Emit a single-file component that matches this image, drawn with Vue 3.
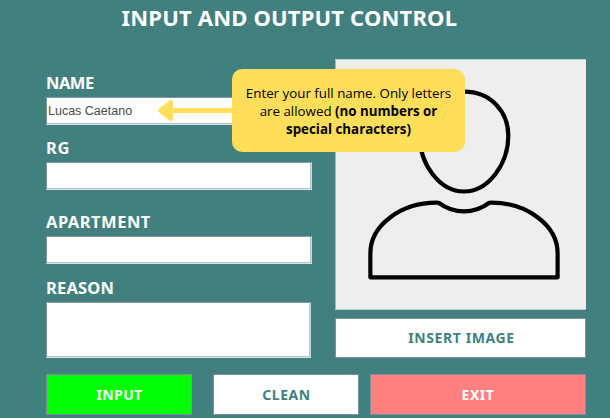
<script setup>
const fields = [
  { id: 'name', label: 'NAME', value: 'Lucas Caetano' },
  { id: 'rg', label: 'RG', value: '' },
  { id: 'apartment', label: 'APARTMENT', value: '' },
]
</script>

<template>
  <main class="window">
    <h1 class="title"><span>INPUT AND OUTPUT CONTROL</span></h1>
    <div class="content">
      <form class="form">
        <div v-for="f in fields" :key="f.id" class="field" :class="f.id">
          <label class="label"><span>{{ f.label }}</span></label>
          <div class="box">{{ f.value }}</div>
        </div>
        <div class="field reason">
          <label class="label"><span>REASON</span></label>
          <div class="box area"></div>
        </div>
      </form>
      <section class="picture">
        <div class="photo">
          <svg width="250" height="250" viewBox="336 60 250 250" fill="none" stroke="#000" stroke-width="4.2" stroke-linejoin="round">
            <path d="M464 91.8C491 91.8 508.500 112 508.500 136C508.500 165 488 192 464 192C440 192 419.500 165 419.500 136C419.500 112 437 91.800 464 91.800Z" />
            <path d="M370 278.200V254C370 226 401 202.500 438.500 203.300C454 214.800 474 214.800 489.500 203.300C527 202.500 558 226 558 254V278.200Z" />
          </svg>
        </div>
        <button class="btn insert"><span>INSERT IMAGE</span></button>
      </section>
    </div>
    <footer class="actions">
      <button class="btn input"><span>INPUT</span></button>
      <button class="btn clean"><span>CLEAN</span></button>
      <button class="btn exit"><span>EXIT</span></button>
    </footer>
    <svg class="arrow" width="76" height="24" viewBox="0 0 76 24">
      <path d="M76 10H16V4.500C16 2.300 14 1.300 12.200 2.700L2.300 10.500C1 11.600 1 13.400 2.300 14.500L12.200 22.300C14 23.700 16 22.700 16 20.500V15H76Z" fill="#ffde59" />
    </svg>
    <aside class="callout">
      <div>Enter your full name. Only letters</div>
      <div>are allowed <b>(no numbers or</b></div>
      <div><b>special characters)</b></div>
    </aside>
  </main>
</template>

<style>
body { margin: 0; background: #427f7f; }
</style>

<style scoped>
.window {
  position: relative;
  box-sizing: border-box;
  width: 610px;
  height: 418px;
  overflow: hidden;
  background: #427f7f;
  font-family: "Noto Sans", sans-serif;
}
.title {
  margin: 0;
  height: 59px;
  box-sizing: border-box;
  padding: 2px 0 0 121.500px;
  color: #fff;
  font-size: 22px;
  line-height: 30px;
  letter-spacing: 0.18px;
  font-weight: 700;
  white-space: nowrap;
}
.content {
  display: grid;
  grid-template-columns: 266px 251px;
  column-gap: 23px;
  padding-left: 46px;
  height: 315px;
}
.form { display: flex; flex-direction: column; padding-top: 13px; }
.label {
  display: block;
  height: 25px;
  line-height: 22px;
  color: #fff;
  font-size: 16.500px;
  font-weight: 700;
}
.name .label { letter-spacing: -0.5px; }
.rg .label { letter-spacing: 0.7px; }
.apartment .label { letter-spacing: 0.5px; }
.reason .label { letter-spacing: 0.2px; }
.box {
  box-sizing: border-box;
  width: 266px;
  height: 28px;
  border: 1px solid #8497a5;
  border-right-color: #c5dbdc;
  border-bottom-color: #d7e8ea;
  box-shadow: inset -1px -1px #b4c1ca;
  background: #fff;
  color: #4a4a4a;
  font: 12.500px/26px "Liberation Sans", sans-serif;
  padding-left: 1px;
}
.rg { margin-top: 12px; }
.apartment { margin-top: 21px; }
.reason { margin-top: 13px; }
.area { width: 265px; height: 56px; }
.picture { display: flex; flex-direction: column; gap: 8px; }
.photo {
  box-sizing: border-box;
  width: 251px;
  height: 251px;
  border-left: 1px solid #9dbcbd;
  border-top: 1px solid #b8cfcf;
  border-bottom: 1px solid #b8cfcf;
  background: #eee;
}
.photo svg { display: block; height: 249px; }
.btn {
  box-sizing: border-box;
  height: 41px;
  margin: 0;
  padding: 0;
  border: 1px solid #7f8f9d;
  border-radius: 0;
  background: #fff;
  color: #427f7f;
  font: 700 14px/20px "Noto Sans", sans-serif;
  letter-spacing: 0.55px;
}
.insert { width: 251px; height: 40px; padding-left: 2px; letter-spacing: 0.6px; }
.actions {
  display: flex;
  padding-left: 46px;
}
.input { width: 146px; padding-left: 1px; background: #0f0; color: #fff; letter-spacing: 0.4px; }
.clean { width: 146px; margin-left: 21px; padding-left: 1px; }
.exit { width: 216px; margin-left: 11px; background: #ff8080; color: #fff; }
.arrow { position: absolute; left: 157px; top: 98px; }
.callout {
  position: absolute;
  left: 232px;
  top: 69px;
  box-sizing: border-box;
  width: 233px;
  height: 83px;
  padding-top: 15px;
  border-radius: 10px;
  background: #ffde59;
  color: #000;
  font: 13.330px/18px "Open Sans", sans-serif;
  text-align: center;
  white-space: nowrap;
}
</style>
